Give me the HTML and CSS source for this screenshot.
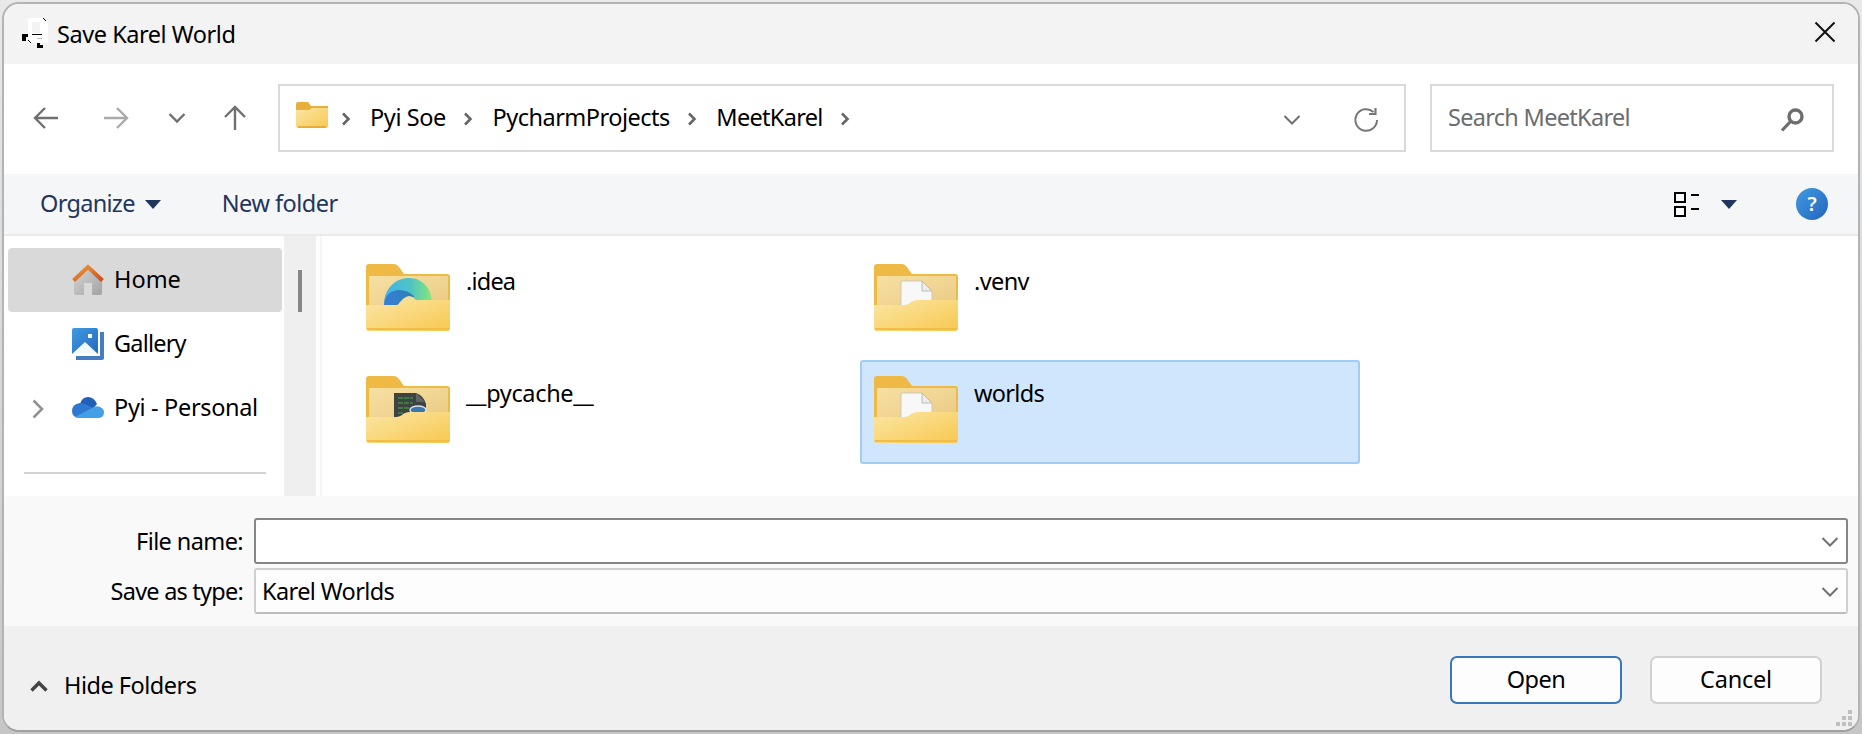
FILE: index.html
```html
<!DOCTYPE html>
<html lang="en">
<head>
<meta charset="utf-8">
<title>Save Karel World</title>
<link rel="stylesheet" href="styles.css">
</head>
<body>
<svg class="defs" aria-hidden="true">
  <defs>
    <linearGradient id="front" x1="0" y1="0" x2="1" y2="1"><stop offset="0" stop-color="#fbe6a4"/><stop offset="1" stop-color="#f8c850"/></linearGradient>
    <linearGradient id="inner" x1="0" y1="0" x2="1" y2="1"><stop offset="0" stop-color="#f7e0a3"/><stop offset="1" stop-color="#eaca83"/></linearGradient>
    <linearGradient id="edgeTop" x1="0" y1="0" x2="1" y2="0"><stop offset="0" stop-color="#41b4ee"/><stop offset=".55" stop-color="#50c3c4"/><stop offset="1" stop-color="#84e878"/></linearGradient>
    <linearGradient id="edgeLow" x1="0" y1="0" x2="1" y2="0"><stop offset="0" stop-color="#3a7fd8"/><stop offset="1" stop-color="#2b7fb4"/></linearGradient>
    <linearGradient id="blue" x1="0" y1="0" x2="1" y2="1"><stop offset="0" stop-color="#3f9ce2"/><stop offset="1" stop-color="#2667bb"/></linearGradient>
    <linearGradient id="roof" x1="0" y1="0" x2="1" y2="1"><stop offset="0" stop-color="#f09a3a"/><stop offset="1" stop-color="#c94f1e"/></linearGradient>
    <linearGradient id="wall" x1="0" y1="0" x2="1" y2="1"><stop offset="0" stop-color="#d6d6d6"/><stop offset="1" stop-color="#a2a2a2"/></linearGradient>
    <symbol id="folder-back" viewBox="0 0 84 68">
      <path d="M0 3Q0 0 3 0H28Q31 0 33 3L38 10H81Q84 10 84 13V60H0Z" fill="#efb945"/>
      <path d="M3 12H82V44H3Z" fill="url(#inner)"/>
    </symbol>
    <symbol id="folder-front" viewBox="0 0 84 68">
      <path d="M0 41H30C36 41 37 36 44 36H84V64Q84 67 81 67H3Q0 67 0 64Z" fill="url(#front)"/>
      <path d="M1 65H83" stroke="#efbe4a" stroke-width="2"/>
    </symbol>
    <symbol id="page" viewBox="0 0 84 68">
      <path d="M27 17H48L58 27V45H27Z" fill="#f8f8f8" stroke="#cfc8b8" stroke-width="1"/>
      <path d="M48 17V27H58Z" fill="#ececec" stroke="#bdb9b0"/>
    </symbol>
    <symbol id="crumb" viewBox="0 0 10 14"><path d="M2 1.5L7.5 7L2 12.5" fill="none" stroke="#666" stroke-width="2.6"/></symbol>
    <symbol id="down" viewBox="0 0 18 12"><path d="M1.5 2L9 9.5L16.5 2" fill="none" stroke="#707070" stroke-width="2"/></symbol>
  </defs>
</svg>
<div class="window">
  <header class="titlebar">
    <svg class="app-icon" viewBox="0 0 28 32"><path d="M6 0H21L26 5V25H6Z" fill="#fff"/><path d="M10 4H18V15H10Z" fill="#f3f3f3"/><path d="M10 16.5H20" stroke="#000" stroke-width="1.2"/><path d="M15 20.5H20" stroke="#bbb" stroke-width="1"/><path d="M21 0L24 3M6 22L9 25" stroke="#000"/><path d="M0 16H6V19H4V23H0ZM15 25H18V27H21V30H15Z"/></svg>
    <h1 class="title t-title">Save Karel World</h1>
    <svg class="close" viewBox="0 0 22 22"><path d="M1.5 1.5L20.5 20.5M20.5 1.5L1.5 20.5" stroke="#111" stroke-width="2"/></svg>
  </header>

  <nav class="navbar">
    <svg class="nav-icon back" viewBox="0 0 26 24"><path d="M25 12H2M12 2L2 12L12 22" fill="none" stroke="#707070" stroke-width="2.4"/></svg>
    <svg class="nav-icon forward" viewBox="0 0 26 24"><path d="M1 12H24M14 2L24 12L14 22" fill="none" stroke="#aaa" stroke-width="2.4"/></svg>
    <svg class="recent" viewBox="0 0 18 12"><path d="M1.5 2L9 9.5L16.5 2" fill="none" stroke="#707070" stroke-width="2.4"/></svg>
    <svg class="up" viewBox="0 0 24 26"><path d="M12 25V2M2 12L12 2L22 12" fill="none" stroke="#707070" stroke-width="2.4"/></svg>
    <div class="address">
      <svg class="small-folder" viewBox="0 0 32 26"><path d="M0 2Q0 0 2 0H12L15 4H32V10H0Z" fill="#e8af3c"/><path d="M0 8H13L16 6H32V24Q32 26 30 26H2Q0 26 0 24Z" fill="url(#front)"/><path d="M2 25H30" stroke="#dfa22e" stroke-width="1.6"/></svg>
      <svg class="crumb c1"><use href="#crumb"/></svg>
      <span class="crumb-text t-soe">Pyi Soe</span>
      <svg class="crumb"><use href="#crumb"/></svg>
      <span class="crumb-text t-proj">PycharmProjects</span>
      <svg class="crumb"><use href="#crumb"/></svg>
      <span class="crumb-text t-meet">MeetKarel</span>
      <svg class="crumb"><use href="#crumb"/></svg>
      <svg class="address-down"><use href="#down"/></svg>
      <svg class="refresh" viewBox="0 0 26 26"><path d="M20.5 5A10.8 10.8 0 1 0 24 13" fill="none" stroke="#777" stroke-width="2"/><path d="M22.5 1V7H16" fill="none" stroke="#777" stroke-width="2.2"/></svg>
    </div>
    <div class="search">
      <span class="t-search">Search MeetKarel</span>
      <svg class="search-icon" viewBox="0 0 24 24"><circle cx="15.500" cy="8.5" r="6.5" fill="none" stroke="#6d6d6d" stroke-width="3.4"/><path d="M10.500 13.5L2 22.5" stroke="#6d6d6d" stroke-width="3.2"/></svg>
    </div>
  </nav>

  <div class="toolbar">
    <span class="label-up t-org">Organize</span>
    <svg class="caret" viewBox="0 0 16 9"><path d="M0 0H16L8 9Z" fill="#20365c"/></svg>
    <span class="label-up new-folder t-new">New folder</span>
    <svg class="view" viewBox="0 0 26 26"><path d="M1 2H11V11H1ZM1 16H11V25H1Z" fill="#fff" stroke="#000" stroke-width="2"/><path d="M17 4H25M17 18H25" stroke="#000" stroke-width="2"/></svg>
    <svg class="caret view-caret" viewBox="0 0 16 9"><path d="M0 0H16L8 9Z" fill="#20365c"/></svg>
    <span class="help">?</span>
  </div>

  <main class="content">
    <aside class="sidebar">
      <div class="side-item selected">
        <svg class="side-icon" viewBox="0 0 32 32"><path d="M2 14L16 3L30 14V29Q30 31 28 31H20V19H12V31H4Q2 31 2 29Z" fill="url(#wall)"/><path d="M1.5 16.5L16 3L30.5 16.5" fill="none" stroke="url(#roof)" stroke-width="4"/></svg>
        <span class="label-up t-home">Home</span>
      </div>
      <div class="side-item">
        <svg class="side-icon" viewBox="0 0 32 32"><path d="M4 28H28V4H32V30Q32 32 30 32H4Z" fill="#477dc0"/><path d="M2 0H24Q26 0 26 2V26H0V2Q0 0 2 0Z" fill="url(#blue)"/><path d="M0 26L13 14L26 26Z" fill="#f3f8fd"/><path d="M16 6H20V10H16Z" fill="#fff"/></svg>
        <span class="label-up t-gal">Gallery</span>
      </div>
      <div class="side-item">
        <svg class="expand" viewBox="0 0 12 20"><path d="M1.5 1.5L10 10L1.5 18.5" fill="none" stroke="#929292" stroke-width="2.6"/></svg>
        <svg class="side-icon" viewBox="0 0 32 32"><path d="M8 12Q10 5 16 5Q22 5 25 12L20 18Z" fill="#2160b8"/><path d="M7 26Q0 25 0 19Q0 12 8 11Q12 11 17 14L26 19L18 26Z" fill="#2f78d0"/><path d="M3 25L18 17Q24 13 28 15Q32 17 32 20Q32 26 26 26H8Q5 26 3 25Z" fill="#44a0e6"/></svg>
        <span class="label-up t-pers">Pyi - Personal</span>
      </div>
      <hr class="divider">
    </aside>
    <div class="track"><div class="thumb"></div></div>
    <section class="files">
      <div class="file">
        <svg class="folder" viewBox="0 0 84 68"><use href="#folder-back"/><path d="M18 41C18 24 30 14 43 14C57 14 66 25 66 40H46Z" fill="url(#edgeTop)"/><path d="M18 41C19 24 37 22 48 32L44 42H18Z" fill="url(#edgeLow)"/><path d="M31 42Q38 32 43 32Q48 32 51 38V42Z" fill="#f7dc95"/><use href="#folder-front"/></svg>
        <span class="t-idea">.idea</span>
      </div>
      <div class="file">
        <svg class="folder" viewBox="0 0 84 68"><use href="#folder-back"/><use href="#page"/><use href="#folder-front"/></svg>
        <span class="t-venv">.venv</span>
      </div>
      <div class="file">
        <svg class="folder" viewBox="0 0 84 68"><use href="#folder-back"/><path d="M28 17H50Q58 20 60 28V44H28Z" fill="#3f4142"/><path d="M50 17V26H59Z" fill="#626466"/><path d="M32 22H47M32 27H47M32 32H43M32 37H38" stroke="#3f7a45" stroke-width="2" stroke-dasharray="5 1"/><ellipse cx="52" cy="34" rx="8" ry="4" fill="#3b77ae" stroke="#d7e3ec" stroke-width="1.4"/><use href="#folder-front"/></svg>
        <span class="t-cache">__pycache__</span>
      </div>
      <div class="file chosen">
        <svg class="folder" viewBox="0 0 84 68"><use href="#folder-back"/><use href="#page"/><use href="#folder-front"/></svg>
        <span class="t-worlds">worlds</span>
      </div>
    </section>
  </main>

  <form class="fields">
    <label class="label"><span class="t-fname">File name:</span></label>
    <div class="combo active"><svg class="combo-down"><use href="#down"/></svg></div>
    <label class="label"><span class="t-type">Save as type:</span></label>
    <div class="combo"><span class="t-kw">Karel Worlds</span><svg class="combo-down"><use href="#down"/></svg></div>
  </form>

  <footer class="footer">
    <svg class="hide-icon" viewBox="0 0 18 12"><path d="M1.5 10.5L9 3L16.5 10.5" fill="none" stroke="#444" stroke-width="3.4"/></svg>
    <span class="hide t-hide">Hide Folders</span>
    <button class="btn primary"><span class="t-open">Open</span></button>
    <button class="btn"><span class="t-cancel">Cancel</span></button>
    <svg class="grip" viewBox="0 0 16 16"><path d="M12 0h4v4h-4zM6 6h4v4H6zM12 6h4v4h-4zM0 12h4v4H0zM6 12h4v4H6zM12 12h4v4h-4z" fill="#bfbfbf"/></svg>
  </footer>
</div>
</body>
</html>
```
FILE: styles.css
```css
* { box-sizing: border-box; }
body {
  margin: 0;
  height: 734px;
  padding: 2px;
  overflow: hidden;
  background: linear-gradient(#e9e9e9, #c6c6c6);
  font: 23.5px/32px "Noto Sans", "Open Sans", sans-serif;
  color: #000;
}
svg { display: block; flex: none; }
span, h1 { white-space: nowrap; }
.defs { position: absolute; width: 0; height: 0; }

.window {
  width: 1858px;
  height: 730px;
  border: 2px solid #b3b3b3;
  border-bottom-color: #a0a0a0;
  border-radius: 17px;
  overflow: hidden;
  background: #fff;
  display: flex;
  flex-direction: column;
}

/* Per-label tracking */
.t-title { letter-spacing: -.45px; }
.t-soe { letter-spacing: -.4px; }
.t-proj { letter-spacing: -.5px; }
.t-meet { letter-spacing: -.7px; }
.t-search { letter-spacing: -.7px; }
.t-org { letter-spacing: -.7px; }
.t-new { letter-spacing: -.5px; }
.t-gal { letter-spacing: -.8px; }
.t-pers { letter-spacing: -.33px; }
.t-idea { letter-spacing: -.8px; }
.t-venv { letter-spacing: -.6px; }
.t-cache { letter-spacing: -.35px; }
.t-worlds { letter-spacing: -.7px; }
.t-fname { letter-spacing: -.6px; }
.t-type { letter-spacing: -.77px; }
.t-kw { letter-spacing: -.6px; }
.t-hide { letter-spacing: -.5px; }
.t-open { letter-spacing: -.5px; }
.t-cancel { letter-spacing: -.2px; }

.titlebar { height: 60px; background: #f3f3f3; display: flex; padding: 14px 22px 0 18px; }
.app-icon { width: 28px; height: 32px; }
.title { margin: 0 auto 0 7px; font-size: inherit; font-weight: 400; }
.close { width: 22px; height: 22px; margin-top: 3px; }

.navbar { height: 110px; display: flex; padding-top: 20px; }
.nav-icon { width: 26px; height: 24px; margin-top: 22px; }
.back { margin-left: 29px; }
.forward { margin-left: 44px; }
.recent { width: 18px; height: 12px; margin: 28px 0 0 39px; }
.up { width: 24px; height: 26px; margin: 21px 0 0 37px; }
.address { width: 1128px; height: 68px; margin-left: 31px; border: 2px solid #d9d9d9; display: flex; align-items: center; padding-left: 16px; }
.small-folder { width: 32px; height: 26px; margin-bottom: 6px; }
.crumb { width: 10px; height: 14px; margin-top: 2px; }
.c1 { margin-left: 13px; }
.crumb-text { margin: 0 17.5px 2px 19px; }
.address-down { width: 18px; height: 12px; margin: 4px 0 0 auto; }
.refresh { width: 26px; height: 26px; margin: 4px 25px 0 52px; }
.search { width: 404px; height: 68px; margin-left: 24px; border: 2px solid #d9d9d9; display: flex; align-items: center; justify-content: space-between; padding: 0 28px 0 16px; color: #6d6d6d; }
.search span { margin-bottom: 2px; }
.search-icon { width: 24px; height: 24px; margin-top: 4px; }

.toolbar { height: 62px; background: #f4f6f8; border-bottom: 2px solid #e8eaec; display: flex; align-items: center; padding: 0 30px 0 36px; color: #24355c; }
.label-up { margin-bottom: 2px; }
.caret { width: 16px; height: 9px; margin-left: 10px; }
.new-folder { margin-right: auto; margin-left: 61px; }
.view { width: 26px; height: 26px; }
.view-caret { margin-left: 21px; }
.help { width: 32px; height: 32px; margin-left: 59px; border-radius: 50%; background: linear-gradient(135deg, #3f9be2, #2465bd); color: #fff; font: 600 20px/32px "Noto Sans", sans-serif; text-align: center; }

.content { height: 260px; display: flex; }
.sidebar { width: 280px; padding: 12px 2px 0 4px; }
.side-item { height: 64px; display: flex; align-items: center; border-radius: 4px; padding-left: 64px; position: relative; }
.selected { background: #d9d9d9; }
.side-icon { width: 32px; height: 32px; margin-right: 10px; }
.expand { position: absolute; left: 24px; top: 23px; width: 12px; height: 20px; }
.divider { margin: 32px 16px 0; border: 0; height: 2px; background: #d3d3d3; }
.track { width: 32px; background: #efefef; padding: 34px 14px 0; }
.thumb { height: 42px; background: #868686; }
.files { flex: 1; margin-left: 4px; border-left: 2px solid #f6f6f6; display: grid; grid-template-columns: 500px 500px; grid-template-rows: 104px 104px; gap: 8px; padding: 12px 0 0 30px; }
.file { display: flex; border: 2px solid transparent; border-radius: 3px; padding: 14px 0 0 12px; }
.file span { margin-top: 1px; }
.chosen { background: #d0e6fd; border-color: #a2ccf4; }
.folder { width: 84px; height: 68px; margin-right: 16px; }

.fields { height: 130px; background: #f9f9f9; display: grid; grid-template-columns: 239px 1594px; grid-template-rows: 46px 46px; column-gap: 11px; row-gap: 4px; padding-top: 22px; }
.label { text-align: right; padding-top: 7px; }
.combo { border: 2px solid #cfcfcf; border-bottom-color: #bcbcbc; border-radius: 3px; background: #fdfdfd; display: flex; align-items: center; padding: 0 7px 0 6px; }
.active { border-color: #868686; background: #fff; }
.combo-down { width: 18px; height: 12px; margin-left: auto; margin-top: 2px; }

.footer { flex: 1; background: #f0f0f0; display: flex; position: relative; padding: 30px 36px 0 26px; }
.hide-icon { width: 18px; height: 12px; margin-top: 24px; }
.hide { margin: 13px auto 0 16px; }
.btn { width: 172px; height: 48px; border: 2px solid #d0d0d0; border-radius: 7px; background: #fdfdfd; padding: 0 0 2px; font: inherit; color: #000; }
.primary { border-color: #3a75bf; margin-right: 28px; }
.grip { position: absolute; right: 6px; bottom: 4px; width: 16px; height: 16px; }
```
